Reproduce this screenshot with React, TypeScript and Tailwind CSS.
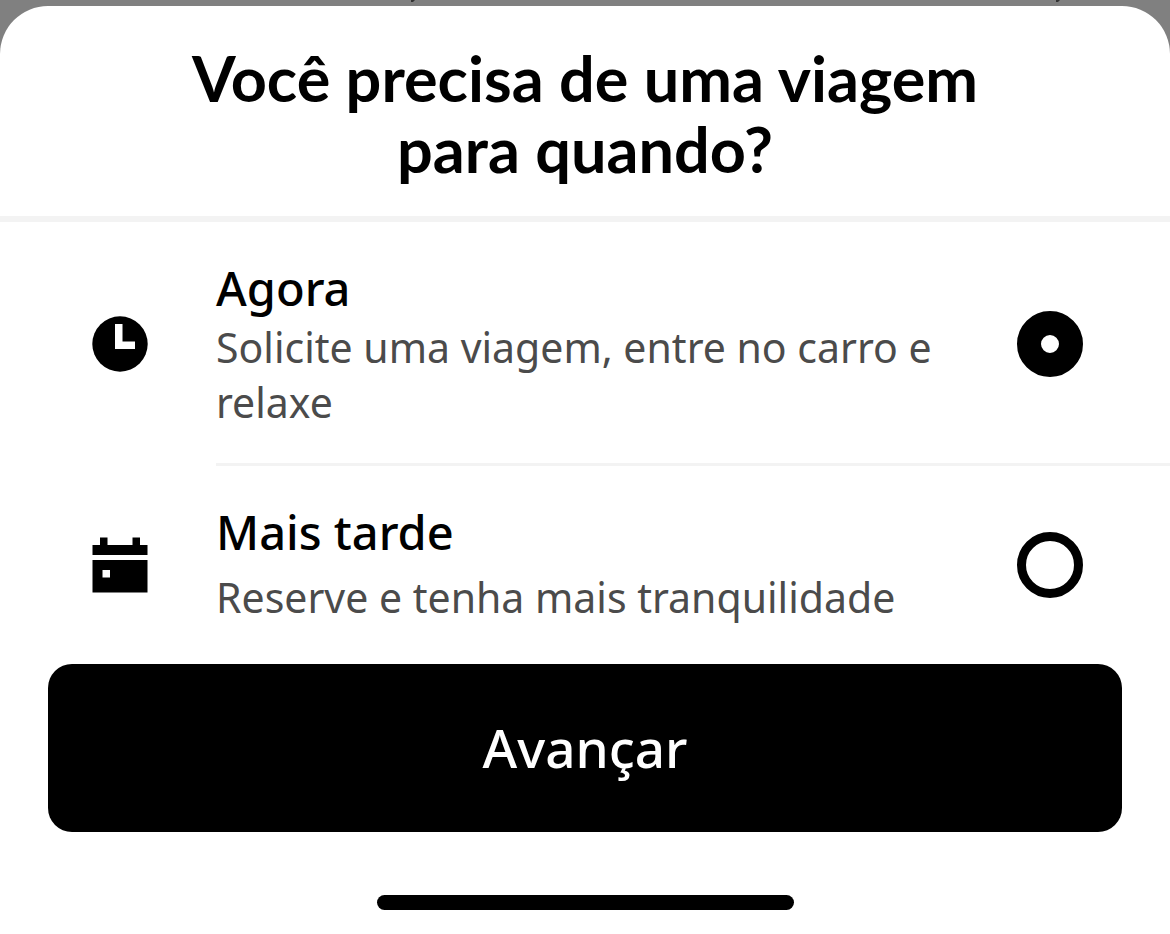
import { useState } from "react";
import type { ReactNode } from "react";

type Choice = "now" | "later";

function ClockIcon() {
  return (
    <svg viewBox="0 0 56 56" className="size-14 shrink-0" aria-hidden="true">
      <circle cx="28" cy="28" r="27.7" fill="#000" />
      <path d="M23 8h7.500v17.500H43V33H23z" fill="#fff" />
    </svg>
  );
}

function CalendarIcon() {
  return (
    <svg viewBox="0 0 56 56" className="size-14 shrink-0" aria-hidden="true">
      <path
        fill="#000"
        fillRule="evenodd"
        d="M8 .5h7.500V8h25V.5H48V8h7.500v10H.5V8H8zM.5 23h55v32.500H.5zM10.500 33v7.500H18V33z"
      />
    </svg>
  );
}

type OptionProps = {
  id: Choice;
  title: string;
  description: string;
  icon: ReactNode;
  checked: boolean;
  onSelect: (id: Choice) => void;
  textClass: string;
};

function Option({ id, title, description, icon, checked, onSelect, textClass }: OptionProps) {
  return (
    <label htmlFor={id} className="flex cursor-pointer items-center pl-[92px] pr-[87px]">
      {icon}
      <span className={`ml-[68px] mr-12 flex flex-1 flex-col ${textClass}`}>
        <span className="text-[47px] leading-[56px] font-medium text-black">{title}</span>
        <span className="text-[41px] leading-[55px] text-[#4b4b4b]">{description}</span>
      </span>
      <input
        id={id}
        type="radio"
        name="when"
        checked={checked}
        onChange={() => onSelect(id)}
        className="size-[66px] shrink-0 appearance-none rounded-full border-[9px] border-black bg-white checked:border-[24px]"
      />
    </label>
  );
}

export default function App() {
  const [choice, setChoice] = useState<Choice>("now");
  return (
    <div className="min-h-screen bg-[#808080] pt-1.5 font-['Noto_Sans',sans-serif]">
      <svg viewBox="0 0 4 3" className="absolute top-0 left-[411px] h-[3px] w-1" aria-hidden="true">
        <path d="M0 0h4L2 2H0z" fill="#333" />
      </svg>
      <svg viewBox="0 0 4 3" className="absolute top-0 left-[1056px] h-[3px] w-1" aria-hidden="true">
        <path d="M0 0h4L2 2H0z" fill="#333" />
      </svg>
      <main className="flex min-h-[calc(100vh-6px)] flex-col rounded-t-[48px] bg-white">
        <header className="flex justify-center border-b-[6px] border-[#f3f3f3] px-12 pt-9 pb-8">
          <h1
            id="question"
            className="max-w-[860px] text-center font-['Lato',sans-serif] text-[63px] leading-[71px] font-bold text-black"
          >
            Você precisa de uma viagem para quando?
          </h1>
        </header>
        <form onSubmit={(event) => event.preventDefault()}>
          <div role="radiogroup" aria-labelledby="question">
            <Option
              id="now"
              title="Agora"
              description="Solicite uma viagem, entre no carro e relaxe"
              icon={<ClockIcon />}
              checked={choice === "now"}
              onSelect={setChoice}
              textClass="gap-1 pt-[38px] pb-9"
            />
            <hr className="-mt-[3px] ml-[216px] border-t-[3px] border-[#f3f3f3]" />
            <Option
              id="later"
              title="Mais tarde"
              description="Reserve e tenha mais tranquilidade"
              icon={<CalendarIcon />}
              checked={choice === "later"}
              onSelect={setChoice}
              textClass="gap-2.5 pt-[38px] pb-[39px]"
            />
          </div>
          <div className="px-12">
            <button
              type="submit"
              className="h-[168px] w-full rounded-3xl bg-black text-[53px] font-medium text-white"
            >
              Avançar
            </button>
          </div>
        </form>
        <div className="mx-auto mt-auto mb-6 h-[15px] w-[417px] rounded-full bg-black" />
      </main>
    </div>
  );
}
